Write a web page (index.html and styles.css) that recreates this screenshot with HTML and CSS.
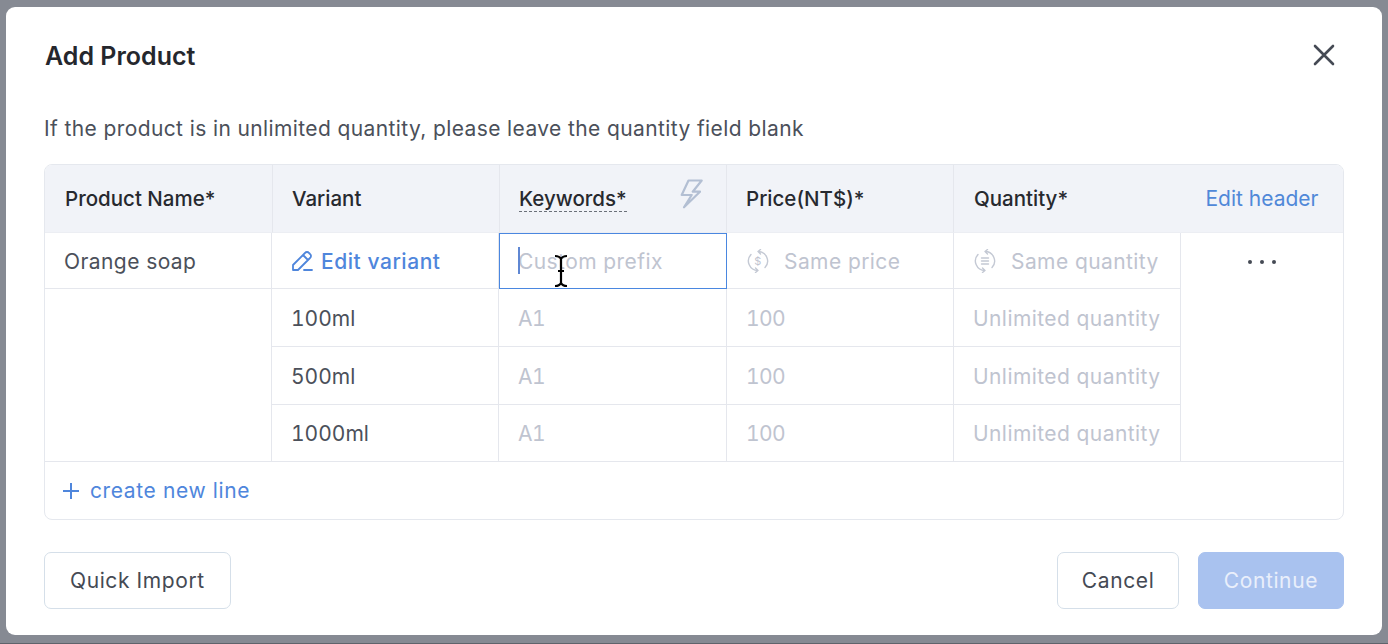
FILE: index.html
```html
<!DOCTYPE html>
<html lang="en">
<head>
<meta charset="utf-8">
<title>Add Product</title>
<link rel="stylesheet" href="styles.css">
</head>
<body>
<main class="modal">
  <header class="modal-head">
    <h1 class="title">Add Product</h1>
    <svg class="close" viewBox="0 0 24 24" width="24" height="24"><path d="M3 3 21 21M21 3 3 21"/></svg>
  </header>
  <p class="hint">If the product is in unlimited quantity, please leave the quantity field blank</p>
  <section class="table">
    <div class="cell head shift first">Product Name*</div>
    <div class="cell head shift">Variant</div>
    <div class="cell head keywords"><span class="dashed">Keywords*</span>
      <svg class="bolt" viewBox="0 0 24 30" width="24" height="30"><path d="M8.500 1.500H21.700L12.700 12.700H20L4 28.300 11.700 16H1.700z"/></svg>
    </div>
    <div class="cell head">Price(NT$)*</div>
    <div class="cell head no-rule">Quantity*</div>
    <div class="cell head last link">Edit header</div>

    <div class="cell body">Orange soap</div>
    <div class="cell body link strong">
      <svg class="pencil" viewBox="0 0 24 24" width="24" height="24"><path d="M3 21v-5L15 4a2.500 2.500 0 0 1 4 0l1 1a2.500 2.500 0 0 1 0 4L8 21zM13 6l5 5M14 21h8"/></svg>
      Edit variant
    </div>
    <div class="cell body muted focus"><i class="caret"></i>Custom prefix
      <svg class="ibeam" viewBox="0 0 16 34" width="16" height="34"><path d="M2 2c3 0 5 1 6 3 1-2 3-3 6-3M8 5v24M2 32c3 0 5-1 6-3 1 2 3 3 6 3M5 17h6"/></svg>
    </div>
    <div class="cell body muted">
      <svg class="sync" viewBox="0 0 24 24" width="24" height="24"><path d="M12 2.500A9.500 9.500 0 0 1 19 18.500M14.500 .5 12 2.500 14.500 5M12 21.500A9.500 9.500 0 0 1 5 5.500M9.500 19 12 21.500 9.500 23.500"/><text x="12" y="16" class="sync-text">$</text></svg>
      Same price
    </div>
    <div class="cell body muted">
      <svg class="sync" viewBox="0 0 24 24" width="24" height="24"><path d="M12 2.500A9.500 9.500 0 0 1 19 18.500M14.500 .5 12 2.500 14.500 5M12 21.500A9.500 9.500 0 0 1 5 5.500M9.500 19 12 21.500 9.500 23.500M8.500 9h7M8.500 12h7M8.500 15h7"/></svg>
      Same quantity
    </div>
    <div class="cell actions"><span class="dots"><i></i><i></i><i></i></span></div>

    <div class="cell spacer"></div>
    <div class="cell body num">100ml</div>
    <div class="cell body muted num">A1</div>
    <div class="cell body muted num">100</div>
    <div class="cell body muted">Unlimited quantity</div>

    <div class="cell body num">500ml</div>
    <div class="cell body muted num">A1</div>
    <div class="cell body muted num">100</div>
    <div class="cell body muted">Unlimited quantity</div>

    <div class="cell body num">1000ml</div>
    <div class="cell body muted num">A1</div>
    <div class="cell body muted num">100</div>
    <div class="cell body muted">Unlimited quantity</div>

    <div class="new-line link">
      <svg class="plus" viewBox="0 0 18 18" width="18" height="18"><path d="M9 1v16M1 9h16"/></svg>
      create new line
    </div>
  </section>
  <footer class="modal-foot">
    <button class="btn">Quick Import</button>
    <div class="foot-right">
      <button class="btn cancel">Cancel</button>
      <button class="btn primary">Continue</button>
    </div>
  </footer>
</main>
</body>
</html>
```
FILE: styles.css
```css
* { box-sizing: border-box; }
html, body { margin: 0; height: 100%; }
body {
  background: #868a93;
  padding: 7px 6px 8px;
  border-bottom: 1px solid #5f636b;
  font-family: Inter, "Liberation Sans", sans-serif;
  overflow: hidden;
}
.modal {
  height: 628px;
  background: #fff;
  border-radius: 9px;
  padding: 0 38px;
  color: #454a54;
}
.modal-head {
  height: 96px;
  display: flex;
  align-items: center;
  justify-content: space-between;
  padding: 0 8px 0 1px;
}
.title { margin: 0; padding-top: 2px; font-size: 25px; font-weight: 600; color: #25272d; }
.close { fill: none; stroke: #454a54; stroke-width: 2.600; stroke-linecap: round; }
.hint { margin: 0; height: 61px; padding-top: 12px; font-size: 21px; letter-spacing: .39px; line-height: 28px; color: #4b505a; }
.table {
  display: grid;
  grid-template-columns: 227px 227px 228px 227px 227px 1fr;
  grid-template-rows: 68px 56px 58px 58px 57px 57px;
  border: 1px solid #e5e8ee;
  border-radius: 8px;
  overflow: hidden;
  height: 356px;
}
.cell {
  display: flex;
  align-items: center;
  padding: 0 19px;
  border-right: 1px solid #e5e7ed;
  border-bottom: 1px solid #e5e7ed;
  white-space: nowrap;
  position: relative;
}
.head { background: #f1f3f8; color: #27292f; font-size: 20.500px; font-weight: 500; border-bottom-color: #eceef3; }
.shift { margin-right: -1px; padding-left: 20px; z-index: 1; }
.first { z-index: 2; }
.no-rule { border-right-color: transparent; padding-left: 20px; }
.head.last { border-right: 0; justify-content: center; padding: 0; font-size: 21px; font-weight: 400; }
.keywords { justify-content: space-between; padding: 0 22px 0 20px; }
.dashed { border-bottom: 1px dashed #6b7079; line-height: 24px; padding-top: 1px; margin-top: 1px; }
.bolt { fill: none; stroke: #b3bfd3; stroke-width: 2.200; stroke-linejoin: round; margin-top: -10px; }
.body { color: #4b505a; font-size: 21px; letter-spacing: .42px; padding-top: 1px; }
.num { font-variant-numeric: tabular-nums; letter-spacing: 0; }
.muted { color: #bfc4d0; }
.muted.num { letter-spacing: -.6px; }
.link { color: #4f86dc; }
.strong { font-weight: 500; letter-spacing: .55px; }
.head.link { color: #5088d8; }
.focus { border: 1px solid #4a87e0; padding-left: 18px; }
.caret { position: absolute; left: 18px; top: 13px; width: 2px; height: 27px; background: #5f87d3; }
.ibeam {
  position: absolute; left: 53px; top: 20px;
  fill: none; stroke: #000; stroke-width: 2.200;
}
.pencil { fill: none; stroke: #4f86dc; stroke-width: 1.800; stroke-linejoin: round; stroke-linecap: round; margin-right: 7px; margin-left: -1px; }
.sync { fill: none; stroke: #c4c9d4; stroke-width: 1.400; stroke-linecap: round; stroke-linejoin: round; margin-right: 14px; }
.sync-text { fill: #bfc4d0; stroke: none; font-size: 11px; text-anchor: middle; }
.actions { grid-column: 6; grid-row: 2 / span 4; border-right: 0; align-items: flex-start; justify-content: center; padding-top: 27px; }
.dots { display: flex; gap: 8px; }
.dots i { width: 4px; height: 4px; border-radius: 50%; background: #454a54; }
.spacer { grid-column: 1; grid-row: 3 / span 3; }
.new-line {
  grid-column: 1 / -1;
  display: flex;
  align-items: center;
  padding: 0 0 0 17px;
  font-size: 21px;
  letter-spacing: .62px;
}
.plus { fill: none; stroke: #4f86dc; stroke-width: 2; margin-right: 10px; }
.modal-foot {
  display: flex;
  justify-content: space-between;
  margin-top: 32px;
}
.foot-right { display: flex; gap: 19px; }
.btn {
  height: 57px;
  padding: 0 25px;
  background: #fff;
  border: 1px solid #d5dfe9;
  border-radius: 7px;
  font: 400 21px Inter, "Liberation Sans", sans-serif;
  letter-spacing: .6px;
  color: #454a54;
}
.btn.cancel { padding: 0 23.500px; }
.btn.primary { background: #a9c2ef; border-color: #a9c2ef; color: #e9effb; }
```
